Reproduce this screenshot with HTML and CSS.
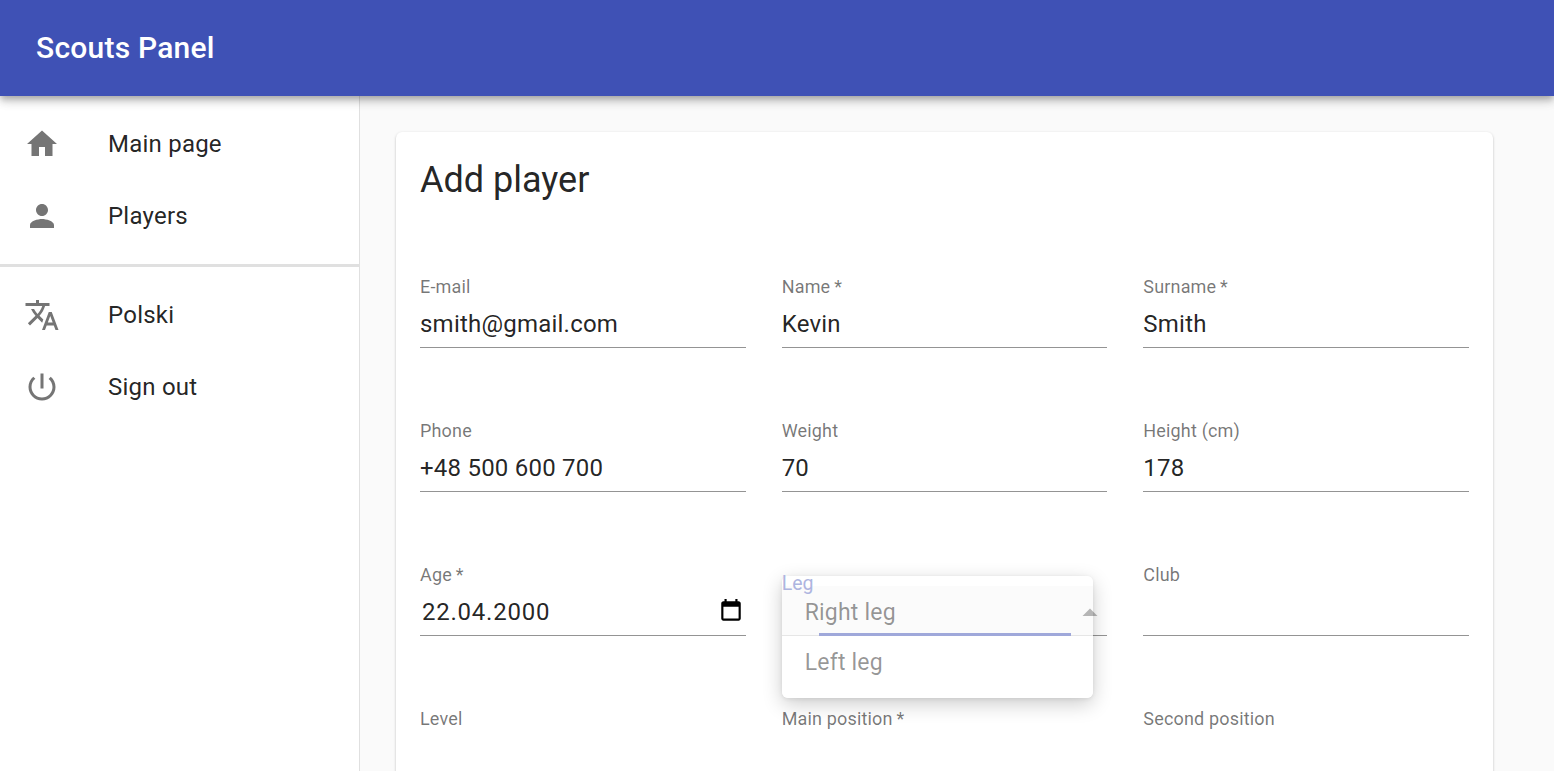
FILE: index.html
```html
<!DOCTYPE html>
<html lang="en">
<head>
  <meta charset="UTF-8" />
  <meta name="viewport" content="width=device-width, initial-scale=1.0"/>
  <title>Scouts Panel</title>
  <link rel="stylesheet" href="styles.css">
</head>
<body>

  <header class="topbar">
    <div class="brand">Scouts Panel</div>
  </header>

  <div class="layout">
    <nav class="sidebar">
      <ul class="nav-list">
        <li class="nav-item">
          <svg class="nav-icon" viewBox="0 0 24 24"><path d="M10 20v-6h4v6h5v-8h3L12 3 2 12h3v8z"/></svg>
          <span>Main page</span>
        </li>
        <li class="nav-item">
          <svg class="nav-icon" viewBox="0 0 24 24"><path d="M12 12c2.21 0 4-1.79 4-4s-1.79-4-4-4-4 1.79-4 4 1.79 4 4 4zm0 2c-2.67 0-8 1.34-8 4v2h16v-2c0-2.66-5.33-4-8-4z"/></svg>
          <span>Players</span>
        </li>
      </ul>
      <div class="divider"></div>
      <ul class="nav-list">
        <li class="nav-item">
          <svg class="nav-icon" viewBox="0 0 24 24"><path d="M12.87 15.07l-2.54-2.51.03-.03c1.74-1.94 2.98-4.17 3.71-6.53H17V4h-7V2H8v2H1v1.99h11.17C11.5 7.92 10.44 9.75 9 11.35 8.07 10.32 7.3 9.19 6.69 8h-2c.73 1.63 1.73 3.17 2.98 4.56l-5.09 5.02L4 19l5-5 3.11 3.11.76-2.04zM18.5 10h-2L12 22h2l1.12-3h4.75L21 22h2l-4.5-12zm-2.62 7l1.62-4.33L19.12 17h-3.24z"/></svg>
          <span>Polski</span>
        </li>
        <li class="nav-item">
          <svg class="nav-icon" viewBox="0 0 24 24"><path d="M13 3h-2v10h2V3zm4.83 2.17l-1.42 1.42C17.99 7.86 19 9.81 19 12c0 3.87-3.13 7-7 7s-7-3.13-7-7c0-2.19 1.01-4.14 2.58-5.42L6.17 5.17C4.23 6.82 3 9.26 3 12c0 4.97 4.03 9 9 9s9-4.03 9-9c0-2.74-1.23-5.18-3.17-6.83z"/></svg>
          <span>Sign out</span>
        </li>
      </ul>
    </nav>

    <main class="content">
      <section class="card">
        <h1 class="card-title">Add player</h1>
        <div class="form-grid">
          <div class="field">
            <label class="field-label">E-mail</label>
            <div class="field-value">smith@gmail.com</div>
          </div>
          <div class="field">
            <label class="field-label">Name&thinsp;*</label>
            <div class="field-value">Kevin</div>
          </div>
          <div class="field">
            <label class="field-label">Surname&thinsp;*</label>
            <div class="field-value">Smith</div>
          </div>
          <div class="field">
            <label class="field-label">Phone</label>
            <div class="field-value">+48 500 600 700</div>
          </div>
          <div class="field">
            <label class="field-label">Weight</label>
            <div class="field-value">70</div>
          </div>
          <div class="field">
            <label class="field-label">Height (cm)</label>
            <div class="field-value">178</div>
          </div>
          <div class="field">
            <label class="field-label">Age&thinsp;*</label>
            <div class="field-value date-value">
              <span class="date-text">22.04.2000</span>
              <svg class="date-icon" viewBox="0 0 24 24"><path d="M19 3h-1V1h-2v2H8V1H6v2H5c-1.11 0-2 .9-2 2v14c0 1.1.89 2 2 2h14c1.1 0 2-.9 2-2V5c0-1.1-.9-2-2-2zm0 16H5V8h14v11z"/></svg>
            </div>
          </div>
          <div class="field leg-field">
            <div class="field-value"></div>
            <!-- select menu caught while fading in -->
            <div class="menu">
              <div class="menu-item menu-item-selected">Right leg</div>
              <div class="menu-item">Left leg</div>
            </div>
            <div class="focus-line"></div>
            <svg class="menu-arrow" viewBox="0 0 24 24"><path d="M7 14l5-5 5 5z"/></svg>
            <label class="field-label leg-label">Leg</label>
          </div>
          <div class="field">
            <label class="field-label">Club</label>
            <div class="field-value"></div>
          </div>
          <div class="field">
            <label class="field-label">Level</label>
            <div class="field-value"></div>
          </div>
          <div class="field">
            <label class="field-label">Main position&thinsp;*</label>
            <div class="field-value"></div>
          </div>
          <div class="field">
            <label class="field-label">Second position</label>
            <div class="field-value"></div>
          </div>
        </div>
      </section>
    </main>
  </div>

</body>
</html>
```

FILE: styles.css
```css
:root {
  --primary: #3f51b5;
  --bg: #fafafa;
  --text: rgba(0, 0, 0, 0.87);
  --muted: rgba(0, 0, 0, 0.54);
  --line: rgba(0, 0, 0, 0.42);
}

html, body {
  height: 100%;
  overflow: hidden;
}

body {
  margin: 0;
  font-family: Roboto, 'Liberation Sans', sans-serif;
  background-color: var(--bg);
  color: var(--text);
}

.topbar {
  position: relative;
  z-index: 2;
  height: 96px;
  box-sizing: border-box;
  padding: 0 36px 2px;
  display: flex;
  align-items: center;
  background-color: var(--primary);
  color: white;
  box-shadow: 0 3px 6px -1px rgba(0,0,0,0.2), 0 6px 8px 0 rgba(0,0,0,0.14), 0 1px 15px 0 rgba(0,0,0,0.12);
}

.brand {
  font-size: 30px;
  font-weight: 500;
  letter-spacing: 0.0075em;
}

.layout {
  display: flex;
  height: 675px;
  overflow: hidden;
}

.sidebar {
  width: 359px;
  flex-shrink: 0;
  background: white;
  border-right: 1px solid #e0e0e0;
}

.nav-list {
  list-style: none;
  margin: 0;
  padding: 12px 0;
}

.nav-item {
  height: 72px;
  padding: 0 24px;
  display: flex;
  align-items: center;
  font-size: 24px;
  letter-spacing: 0.00938em;
}

.nav-icon {
  width: 36px;
  height: 36px;
  margin-right: 48px;
  fill: #757575;
}

.divider {
  height: 3px;
  background-color: #e0e0e0;
}

.content {
  flex: 1;
  padding: 36px 61px 0 36px;
}

.card {
  height: 800px;
  padding: 24px;
  background: white;
  border-radius: 6px;
  box-shadow: 0 1px 3px 0 rgba(0,0,0,0.2), 0 1px 1px 0 rgba(0,0,0,0.14), 0 2px 1px -1px rgba(0,0,0,0.12);
}

.card-title {
  margin: 0 0 74px;
  font-size: 36px;
  font-weight: 400;
  line-height: 48px;
}

.form-grid {
  display: grid;
  grid-template-columns: repeat(3, 1fr);
  column-gap: 36px;
  row-gap: 72px;
}

.field {
  position: relative;
  height: 72px;
}

.field-label {
  display: block;
  height: 18px;
  font-size: 18px;
  line-height: 18px;
  letter-spacing: 0.00938em;
  color: var(--muted);
}

.field-value {
  height: 52px;
  box-sizing: border-box;
  padding-top: 10px;
  font-size: 24px;
  line-height: 36px;
  letter-spacing: 0.00938em;
  border-bottom: 1px solid var(--line);
}

.date-value {
  display: flex;
  justify-content: space-between;
  align-items: flex-start;
  padding-left: 2px;
  padding-right: 2px;
}

.date-text {
  letter-spacing: 0.032em;
}

.date-icon {
  width: 26px;
  height: 26px;
  margin-top: 4px;
  fill: black;
}

.leg-field .field-value {
  margin-top: 18px;
}

.menu {
  position: absolute;
  top: 10px;
  left: 0;
  width: 311px;
  height: 122px;
  padding-top: 10px;
  box-sizing: border-box;
  background: rgba(255, 255, 255, 0.8);
  border-radius: 6px;
  box-shadow: 0 6px 20px rgba(0,0,0,0.2), 0 1px 4px rgba(0,0,0,0.08);
}

.menu-item {
  height: 50px;
  box-sizing: border-box;
  padding: 3px 0 0 23px;
  font-size: 23px;
  line-height: 48px;
  letter-spacing: 0.00938em;
  color: rgba(0, 0, 0, 0.42);
}

.menu-item-selected {
  background-color: rgba(0, 0, 0, 0.015);
}

.focus-line {
  position: absolute;
  top: 67px;
  left: 37px;
  width: 252px;
  height: 3px;
  background-color: #9fa8da;
}

.menu-arrow {
  position: absolute;
  top: 29px;
  left: 290px;
  width: 36px;
  height: 36px;
  fill: rgba(0, 0, 0, 0.28);
}

.leg-label {
  position: absolute;
  top: 9px;
  left: 0;
  font-size: 19.5px;
  letter-spacing: 0;
  color: #aeb5e0;
}
```
